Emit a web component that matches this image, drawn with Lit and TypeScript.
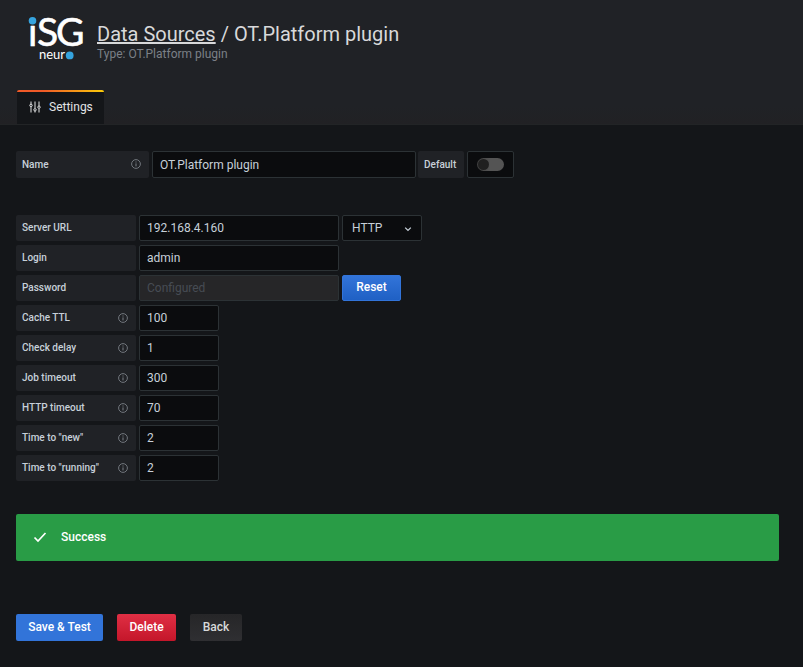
import { LitElement, html, css, svg } from "lit";
import { customElement, property } from "lit/decorators.js";

interface NumberField {
  id: string;
  label: string;
  value: string;
}

const NUMBER_FIELDS: NumberField[] = [
  { id: "cache-ttl", label: "Cache TTL", value: "100" },
  { id: "check-delay", label: "Check delay", value: "1" },
  { id: "job-timeout", label: "Job timeout", value: "300" },
  { id: "http-timeout", label: "HTTP timeout", value: "70" },
  { id: "time-new", label: 'Time to "new"', value: "2" },
  { id: "time-running", label: 'Time to "running"', value: "2" },
];

const infoIcon = html`<svg class="info" viewBox="0 0 10 10" width="10" height="10" aria-hidden="true">
  ${svg`<circle cx="5" cy="5" r="4.4" fill="none" stroke="currentColor" stroke-width="0.9" />
  <path d="M5 4.4V7.4M5 2.5V3.5" stroke="currentColor" stroke-width="1" />`}
</svg>`;

@customElement("page-header")
export class PageHeader extends LitElement {
  @property() name = "";

  static styles = css`
    :host {
      display: block;
      background: linear-gradient(#202226 85%, #212124);
      border-bottom: 1px solid #222426;
      padding: 16px 16px 0;
    }
    .top {
      display: flex;
      gap: 13px;
    }
    .logo {
      display: block;
      width: 56px;
      height: 48px;
      margin-left: 12px;
      overflow: visible;
    }
    .big {
      font: 39px Lato, sans-serif;
      fill: #fff;
      stroke: #fff;
      stroke-width: 0.6;
      stroke-linejoin: round;
    }
    .small {
      font: 13px Lato, sans-serif;
      fill: #fff;
    }
    .dot {
      fill: #35a4df;
    }
    h1 {
      margin: 6px 0 0;
      font-size: 20px;
      line-height: 24px;
      font-weight: 400;
      color: #d8d9da;
    }
    h1 a {
      color: inherit;
      text-decoration: underline;
    }
    .type {
      font-size: 12px;
      line-height: 16px;
      color: #7b8087;
    }
    nav {
      display: flex;
      margin: 26px 0 0 1px;
    }
    .tab {
      position: relative;
      display: flex;
      align-items: center;
      gap: 8px;
      height: 34px;
      box-sizing: border-box;
      padding: 0 11px 0 12px;
      background: #141619;
      border-radius: 2px 2px 0 0;
      overflow: hidden;
      color: #e3e4e5;
      font-size: 12px;
      text-decoration: none;
    }
    .tab::before {
      content: "";
      position: absolute;
      inset: 0 0 auto;
      height: 2px;
      background: linear-gradient(90deg, #f05a28 30%, #fbca0a 99%);
    }
  `;

  render() {
    return html`
      <div class="top">
        <svg class="logo" viewBox="0 0 56 48" role="img" aria-label="iSG neuro">
          <circle class="dot" cx="4.5" cy="4.7" r="3.8" />
          <text class="big" y="29.7"><tspan x="0">ı</tspan><tspan x="9">S</tspan><tspan x="28">G</tspan></text>
          <text class="small" x="11" y="43">neur</text>
          <circle class="dot" cx="41.7" cy="39.4" r="3.9" />
        </svg>
        <div>
          <h1><a href="#sources">Data Sources</a> / ${this.name}</h1>
          <div class="type">Type: ${this.name}</div>
        </div>
      </div>
      <nav>
        <a class="tab" href="#settings" aria-current="page">
          <svg width="12" height="12" viewBox="0 0 12 12" fill="none" stroke="currentColor" aria-hidden="true">
            <path d="M2 0.5V3.5M2 6V11.5M6 0.5V7M6 10V11.5M10 0.5V5M10 8V11.5" />
            <circle cx="2" cy="4.4" r="1.2" />
            <circle cx="6" cy="8.8" r="1.2" />
            <circle cx="10" cy="6.2" r="1.2" />
          </svg>
          Settings
        </a>
      </nav>
    `;
  }
}

@customElement("app-root")
export class AppRoot extends LitElement {
  static styles = css`
    :host {
      display: block;
      min-height: 100vh;
      background: #141619;
      color: #c7d0d9;
      font-family: Roboto, sans-serif;
      font-size: 12px;
    }
    main {
      padding: 26px 24px 26px 16px;
    }
    .row {
      display: flex;
      gap: 3px;
      height: 26px;
      margin-bottom: 4px;
    }
    .name-row {
      height: 27px;
      margin-bottom: 37px;
    }
    label {
      display: flex;
      align-items: center;
      justify-content: space-between;
      box-sizing: border-box;
      width: 120px;
      padding: 0 8px 1px 6px;
      background: #202226;
      border-radius: 2px;
      color: #c7d0d9;
      font-size: 10px;
      font-weight: 500;
    }
    .name-row label {
      width: 133px;
    }
    .name-row .default {
      width: 46px;
      padding: 0 6px 1px;
      margin-left: -1px;
    }
    .info {
      color: #7b8087;
    }
    input,
    select {
      font: inherit;
      color: #c7d0d9;
    }
    .field,
    select,
    .switch {
      box-sizing: border-box;
      margin: 0;
      background: #0b0c0e;
      border: 1px solid #2c3235;
      border-radius: 2px;
    }
    .field {
      padding: 0 7px;
      width: 200px;
    }
    .name-row .field {
      width: 264px;
    }
    .number {
      width: 80px;
    }
    .field:disabled {
      background: #262628;
    }
    .field::placeholder {
      color: #464c54;
      opacity: 1;
    }
    .switch {
      display: flex;
      align-items: center;
      justify-content: center;
      width: 47px;
    }
    .switch input {
      appearance: none;
      display: flex;
      width: 27px;
      height: 13px;
      margin: 0;
      border-radius: 7px;
      background: linear-gradient(90deg, #404040, #545454 50%);
    }
    .switch input::before {
      content: "";
      width: 11px;
      height: 11px;
      margin: 1px;
      border-radius: 50%;
      background: #202020;
    }
    .select {
      position: relative;
      display: flex;
      width: 80px;
    }
    select {
      appearance: none;
      width: 100%;
      padding: 0 9px;
    }
    .chevron {
      position: absolute;
      right: 10px;
      top: 10px;
      pointer-events: none;
    }
    button {
      box-sizing: border-box;
      height: 27px;
      padding: 0 0 2px;
      border: 0;
      border-radius: 2px;
      color: #fff;
      font: 500 12px Roboto, sans-serif;
    }
    .reset,
    .delete {
      width: 59px;
    }
    .reset {
      height: 26px;
      border: 1px solid #3274d9;
      background: linear-gradient(#3274d9, #1f60c4);
    }
    .alert {
      display: flex;
      align-items: center;
      gap: 14px;
      height: 47px;
      margin-top: 33px;
      padding: 0 17px 2px;
      box-sizing: border-box;
      background: #299c46;
      border-radius: 2px;
      color: #fff;
      font-weight: 500;
    }
    .actions {
      display: flex;
      gap: 14px;
      margin-top: 53px;
    }
    .save {
      width: 87px;
      background: #3274d9;
    }
    .delete {
      background: linear-gradient(#e02f44, #c4162a);
    }
    .back {
      width: 52px;
      background: linear-gradient(#262628, #2f2f32);
      color: #d8d9da;
    }
  `;

  render() {
    return html`
      <page-header name="OT.Platform plugin"></page-header>
      <main>
        <div class="row name-row">
          <label for="name">Name ${infoIcon}</label>
          <input class="field" id="name" type="text" .value=${"OT.Platform plugin"} />
          <label class="default" for="default">Default</label>
          <div class="switch"><input id="default" type="checkbox" /></div>
        </div>

        <div class="row">
          <label for="url">Server URL</label>
          <input class="field" id="url" type="text" .value=${"192.168.4.160"} />
          <div class="select">
            <select aria-label="Protocol">
              <option>HTTP</option>
              <option>HTTPS</option>
            </select>
            <svg class="chevron" width="8" height="8" viewBox="0 0 8 8" aria-hidden="true">
              <path d="M1.2 2.6L4 5.4L6.8 2.6" fill="none" stroke="#c7d0d9" stroke-width="1.3" />
            </svg>
          </div>
        </div>
        <div class="row">
          <label for="login">Login</label>
          <input class="field" id="login" type="text" .value=${"admin"} />
        </div>
        <div class="row">
          <label for="password">Password</label>
          <input class="field" id="password" type="password" placeholder="Configured" disabled />
          <button class="reset" type="button">Reset</button>
        </div>
        ${NUMBER_FIELDS.map(
          (f) => html`<div class="row">
            <label for=${f.id}>${f.label} ${infoIcon}</label>
            <input class="field number" id=${f.id} type="text" inputmode="numeric" .value=${f.value} />
          </div>`
        )}

        <div class="alert" role="status">
          <svg width="14" height="12" viewBox="0 0 14 12" aria-hidden="true">
            <path d="M1.5 6.5L5 10L12.5 2" fill="none" stroke="#fff" stroke-width="1.7" />
          </svg>
          Success
        </div>

        <div class="actions">
          <button class="save" type="button">Save &amp; Test</button>
          <button class="delete" type="button">Delete</button>
          <button class="back" type="button">Back</button>
        </div>
      </main>
    `;
  }
}
